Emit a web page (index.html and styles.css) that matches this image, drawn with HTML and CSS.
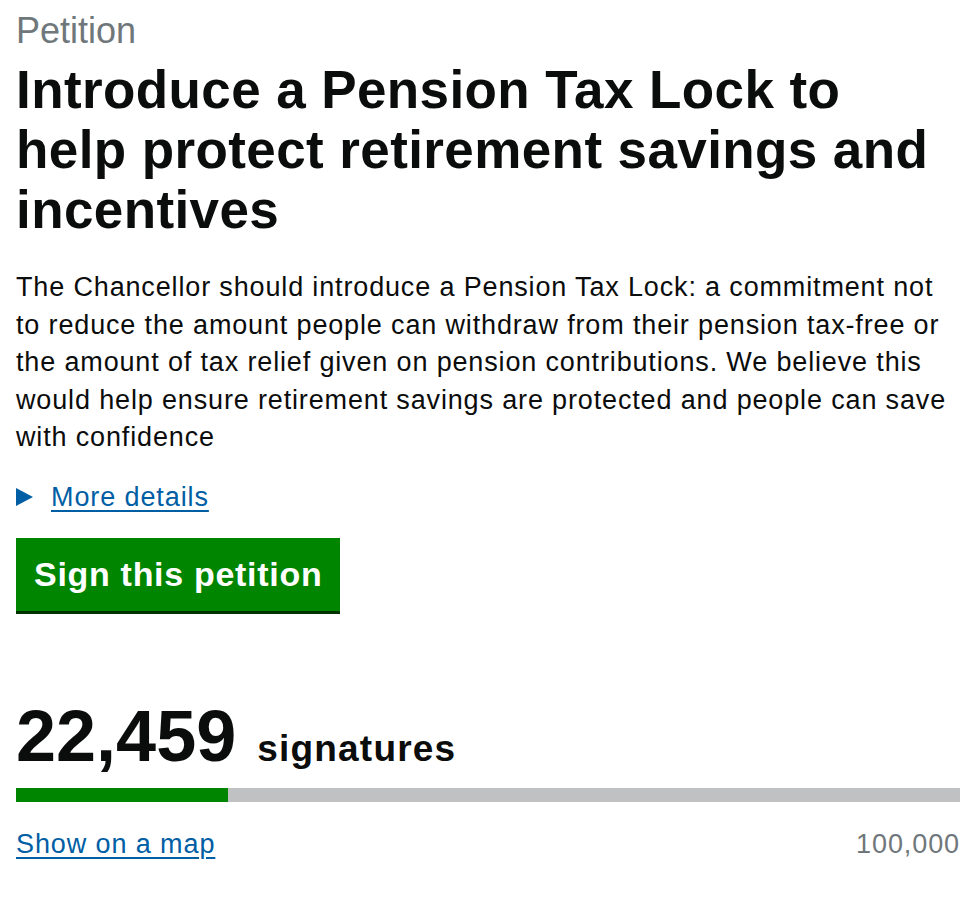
FILE: index.html
```html
<!DOCTYPE html>
<html lang="en">
<head>
<meta charset="utf-8">
<title>Petition</title>
<link rel="stylesheet" href="styles.css">
</head>
<body>
<main class="page">
  <p class="caption">Petition</p>
  <h1 class="title">Introduce a Pension Tax Lock to help protect retirement savings and incentives</h1>
  <p class="summary">The Chancellor should introduce a Pension Tax Lock: a commitment not to reduce the amount people can withdraw from their pension tax-free or the amount of tax relief given on pension contributions. We believe this would help ensure retirement savings are protected and people can save with confidence</p>
  <div class="details">
    <span class="arrow"></span>
    <a class="link" href="#">More details</a>
  </div>
  <a class="button" href="#">Sign this petition</a>
  <div class="count">
    <span class="count-number">22,459</span>
    <span class="count-label">signatures</span>
  </div>
  <div class="bar"><div class="bar-fill" style="width: 22.459%"></div></div>
  <div class="bar-foot">
    <a class="link" href="#">Show on a map</a>
    <span class="target">100,000</span>
  </div>
</main>
</body>
</html>
```
FILE: styles.css
```css
* { box-sizing: border-box; }
html, body { margin: 0; padding: 0; background: #fff; }
body {
  font-family: "Liberation Sans", Arial, Helvetica, sans-serif;
  color: #0b0c0c;
}
.page {
  padding: 0 20px 0 16px;
  display: flex;
  flex-direction: column;
  align-items: flex-start;
}
.caption {
  margin: 10px 0 0;
  font-size: 36px;
  line-height: 42px;
  color: #6f777b;
}
.title {
  margin: 8px 0 0;
  font-size: 53px;
  line-height: 60px;
  font-weight: 700;
  letter-spacing: 0.4px;
}
.summary {
  margin: 29px 0 0;
  font-size: 27px;
  line-height: 37.5px;
  letter-spacing: 0.85px;
}
.details {
  margin-top: 22px;
  display: flex;
  align-items: center;
  gap: 18px;
}
.arrow {
  width: 0;
  height: 0;
  border-top: 9.5px solid transparent;
  border-bottom: 9.5px solid transparent;
  border-left: 17px solid #005ea5;
}
.link {
  font-size: 27px;
  line-height: 36px;
  letter-spacing: 0.9px;
  color: #005ea5;
  text-decoration: underline;
  text-underline-offset: 4px;
  text-decoration-thickness: 2px;
}
.button {
  margin-top: 23px;
  display: block;
  background: #008500;
  color: #fff;
  font-size: 34px;
  font-weight: 700;
  line-height: 40px;
  letter-spacing: 0.7px;
  padding: 16px 18px 17px;
  border-bottom: 3px solid #003300;
  text-decoration: none;
}
.count {
  margin-top: 82px;
  display: flex;
  align-items: baseline;
  gap: 21px;
}
.count-number {
  font-size: 72px;
  line-height: 80px;
  font-weight: 700;
}
.count-label {
  font-size: 37px;
  font-weight: 700;
  letter-spacing: 1.2px;
}
.bar {
  margin-top: 12px;
  width: 100%;
  height: 14px;
  background: #bfc1c3;
}
.bar-fill {
  height: 100%;
  background: #008500;
}
.bar-foot {
  margin-top: 24px;
  width: 100%;
  display: flex;
  justify-content: space-between;
  align-items: baseline;
}
.target {
  font-size: 27px;
  letter-spacing: 0.9px;
  color: #6f777b;
}
```
